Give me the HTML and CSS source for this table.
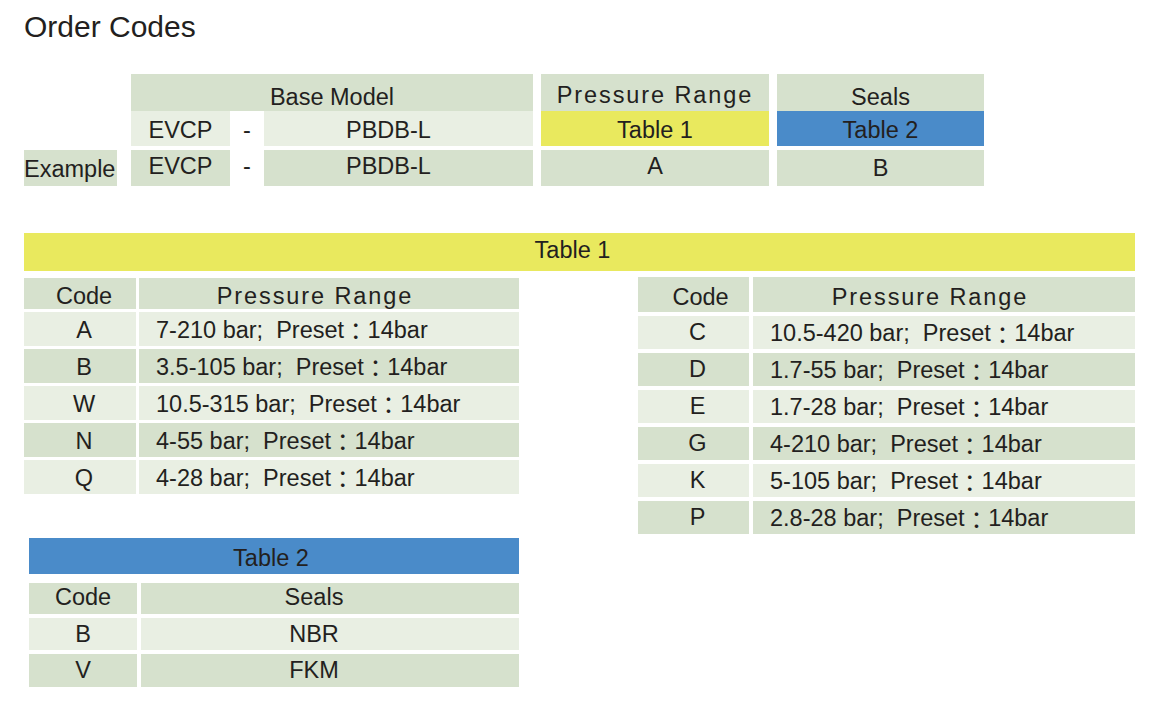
FILE: index.html
```html
<!DOCTYPE html>
<html>
<head>
<meta charset="utf-8">
<link rel="stylesheet" href="styles.css">
</head>
<body>
<div class="page">
  <h1 class="title">Order Codes</h1>

  <div class="model">
    <div class="mrow mrow-head">
      <div class="c-blank"></div>
      <div class="c-base dark hd">Base Model</div>
      <div class="c-pr dark hd-pr spaced">Pressure Range</div>
      <div class="c-seal dark hd-seal">Seals</div>
    </div>
    <div class="mrow mrow-mid">
      <div class="c-ex"></div>
      <div class="c-evcp light">EVCP</div>
      <div class="c-dash">-</div>
      <div class="c-pbdb light">PBDB-L</div>
      <div class="c-pr yellow">Table 1</div>
      <div class="c-seal blue">Table 2</div>
    </div>
    <div class="mrow mrow-ex">
      <div class="c-ex dark ex">Example</div>
      <div class="c-evcp dark">EVCP</div>
      <div class="c-dash">-</div>
      <div class="c-pbdb dark">PBDB-L</div>
      <div class="c-pr dark">A</div>
      <div class="c-seal dark low">B</div>
    </div>
  </div>

  <div class="bar1 yellow">Table 1</div>

  <div class="lower">
    <div class="leftcol">
      <div class="t1 t1-left">
        <div class="cell dark th code">Code</div>
        <div class="cell dark th spaced rh">Pressure Range</div>
        <div class="cell light code">A</div><div class="cell light rng">7-210 bar;&nbsp; Preset<span class="colon">：</span>14bar</div>
        <div class="cell dark code">B</div><div class="cell dark rng">3.5-105 bar;&nbsp; Preset<span class="colon">：</span>14bar</div>
        <div class="cell light code">W</div><div class="cell light rng">10.5-315 bar;&nbsp; Preset<span class="colon">：</span>14bar</div>
        <div class="cell dark code">N</div><div class="cell dark rng">4-55 bar;&nbsp; Preset<span class="colon">：</span>14bar</div>
        <div class="cell light code">Q</div><div class="cell light rng">4-28 bar;&nbsp; Preset<span class="colon">：</span>14bar</div>
      </div>

      <div class="t2">
        <div class="bar2 blue">Table 2</div>
        <div class="t2-grid">
          <div class="cell dark th2">Code</div>
          <div class="cell dark th2 sc">Seals</div>
          <div class="cell light">B</div><div class="cell light sc">NBR</div>
          <div class="cell dark">V</div><div class="cell dark sc">FKM</div>
        </div>
      </div>
    </div>

    <div class="t1 t1-right">
      <div class="cell dark th code-h">Code</div>
      <div class="cell dark th spaced rh">Pressure Range</div>
      <div class="cell light code">C</div><div class="cell light rng">10.5-420 bar;&nbsp; Preset<span class="colon">：</span>14bar</div>
      <div class="cell dark code">D</div><div class="cell dark rng">1.7-55 bar;&nbsp; Preset<span class="colon">：</span>14bar</div>
      <div class="cell light code">E</div><div class="cell light rng">1.7-28 bar;&nbsp; Preset<span class="colon">：</span>14bar</div>
      <div class="cell dark code">G</div><div class="cell dark rng">4-210 bar;&nbsp; Preset<span class="colon">：</span>14bar</div>
      <div class="cell light code">K</div><div class="cell light rng">5-105 bar;&nbsp; Preset<span class="colon">：</span>14bar</div>
      <div class="cell dark code">P</div><div class="cell dark rng">2.8-28 bar;&nbsp; Preset<span class="colon">：</span>14bar</div>
    </div>
  </div>
</div>
</body>
</html>
```

FILE: styles.css
```css
* { box-sizing: border-box; }
html, body { margin: 0; padding: 0; background: #ffffff; }
body {
  font-family: "Liberation Sans", Arial, "Noto Sans CJK TC", sans-serif;
  color: #231f20;
  font-size: 23.5px;
}
.page {
  width: 1161px;
  height: 708px;
  padding: 10px 0 0 24px;
  overflow: hidden;
}
.title {
  margin: 0;
  font-size: 30px;
  line-height: 34px;
  font-weight: normal;
}
.colon {
  font-family: "Noto Sans CJK TC", "Noto Sans CJK JP", sans-serif;
}

.dark { background: #d6e1cd; }
.light { background: #e9efe3; }
.yellow { background: #e9e95e; }
.blue { background: #4a8bc9; }
.spaced { letter-spacing: 1.9px; }

/* top model table */
.model { margin-top: 30px; display: flex; flex-direction: column; }
.mrow {
  display: grid;
  grid-template-columns: 93px 99px 34px 269px 228px 207px;
}
.mrow > div {
  display: flex;
  align-items: center;
  justify-content: center;
  white-space: nowrap;
}
.mrow-head { height: 36px; margin-bottom: 1px; }
.mrow-mid { height: 35px; margin-bottom: 4px; }
.mrow-mid > div { padding-top: 4px; }
.mrow-ex { height: 36px; }
.mrow-ex > div { padding-bottom: 3px; }
.mrow-ex > .low { padding-bottom: 0; }
.c-blank { grid-column: 1; }
.c-base { grid-column: 2 / 5; margin-left: 14px; margin-right: -14px; }
.c-ex { grid-column: 1; }
.c-evcp { grid-column: 2; margin-left: 14px; margin-right: -14px; }
.c-dash { grid-column: 3; margin-left: 14px; margin-right: -14px; }
.mrow > .c-pbdb { grid-column: 4; margin-left: 14px; margin-right: -14px; justify-content: flex-start; padding-left: 82px; }
.c-pr { grid-column: 5; margin-left: 22px; margin-right: -22px; }
.c-seal { grid-column: 6; margin-left: 30px; margin-right: -30px; }
.mrow > .hd { padding-top: 9px; }
.mrow > .hd-pr { padding-top: 5px; }
.mrow > .hd-seal { padding-top: 10px; }
.mrow > .ex { justify-content: flex-start; padding-bottom: 0; padding-top: 2px; }

/* table 1 bar */
.bar1 {
  margin-top: 47px;
  width: 1111px;
  height: 38px;
  display: flex;
  align-items: center;
  justify-content: center;
  padding-right: 14px;
  padding-bottom: 3px;
}

.lower {
  display: flex;
  align-items: flex-start;
  margin-top: 6px;
}
.leftcol { width: 495px; display: flex; flex-direction: column; }

.cell {
  display: flex;
  align-items: center;
  justify-content: center;
  white-space: nowrap;
}
.cell.rng { justify-content: flex-start; padding-left: 17px; }
.cell.code { padding-left: 8px; }
.cell.code-h { padding-left: 14px; }
.cell.rh { padding-right: 28px; }

.t1 { display: grid; }
.t1-left {
  margin-top: 1px;
  grid-template-columns: 112px 380px;
  grid-template-rows: 31px repeat(5, 34px);
  column-gap: 3px;
  row-gap: 3px;
}
.t1-left .cell { padding-top: 2px; }
.t1 .th { padding-top: 5px; }
.t1-right {
  margin-left: 119px;
  grid-template-columns: 111px 382px;
  grid-template-rows: 35px repeat(6, 33px);
  column-gap: 4px;
  row-gap: 4px;
}
.t1-right .rng { padding-top: 2px; }

.t2 { margin-top: 44px; margin-left: 5px; width: 490px; }
.bar2 {
  height: 36px;
  display: flex;
  align-items: center;
  justify-content: center;
  padding-top: 4px;
  padding-right: 6px;
}
.t2-grid {
  margin-top: 9px;
  display: grid;
  grid-template-columns: 108px 378px;
  grid-template-rows: 31px 32px 33px;
  column-gap: 4px;
  row-gap: 4px;
}
.t2-grid .th2 { padding-bottom: 2px; }
.t2-grid .sc { padding-right: 32px; }
```
